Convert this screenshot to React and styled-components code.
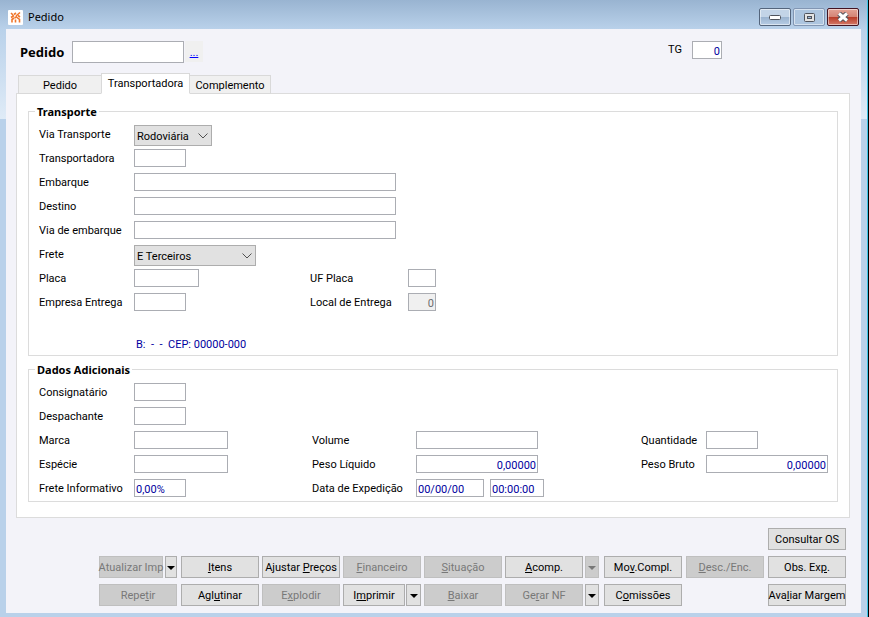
import React from 'react';
import styled, { createGlobalStyle, css } from 'styled-components';

const font = "Roboto, 'Liberation Sans', sans-serif";
const boldFont = "'Noto Sans', 'DejaVu Sans', sans-serif";

const GlobalStyle = createGlobalStyle`
  * {
    box-sizing: border-box;
  }

  body {
    margin: 0;
    font-family: ${font};
    font-size: 11px;
    line-height: 14px;
    color: #000;
  }

  button, input, select {
    font: inherit;
    margin: 0;
  }
`;

// Window frame
const Window = styled.div`
  display: flex;
  flex-direction: column;
  min-height: 100vh;
  padding: 0 7px 4px 6px;
  border-right: 1px solid #000;
  box-shadow: inset -1px 0 0 #3cc4e6;
  background:
    linear-gradient(#99b4d1, #b9d1ea) 0 0 / 100% 29px no-repeat,
    linear-gradient(#b9d1ea, #dfebf7) 0 29px / 100% 90px no-repeat,
    #b9d1ea;
`;

const TitleBar = styled.header`
  display: flex;
  align-items: center;
  height: 29px;
  padding: 5px 2px 0 2px;
  gap: 5px;
`;

const Title = styled.h1`
  flex: 1;
  margin: 0;
  font-family: 'Noto Sans', sans-serif;
  font-size: 11px;
  font-weight: 400;
`;

const WindowButtons = styled.div`
  display: flex;
  gap: 2px;
`;

const WindowButton = styled.button`
  display: flex;
  align-items: center;
  justify-content: center;
  width: 32px;
  height: 18px;
  padding: 0;
  border: 1px solid ${props => props.$border || '#54657c'};
  border-radius: 2px;
  box-shadow: inset 0 0 0 1px rgba(255, 255, 255, 0.5);
  background: ${props => props.$background || 'linear-gradient(#c3d4e7 50%, #9ab3cf 50%, #b7cde5)'};
`;

const Client = styled.main`
  flex: 1;
  padding: 12px 11px 7px 10px;
  background: #f3f3f9;
`;

// Inputs
const TextInput = styled.input`
  width: ${props => props.$width}px;
  height: ${props => props.$height || 18}px;
  padding: 2px 1px 0;
  border: 1px solid #abadb3;
  border-radius: 0;
  background: #fff;
  color: #0000a0;
  text-align: ${props => props.$align || 'left'};
  outline: none;

  &:disabled {
    background: #f0f0f0;
    color: #6d6d6d;
  }
`;

const SelectBox = styled.span`
  display: grid;
  align-items: center;
  align-self: end;
  width: ${props => props.$width}px;

  select {
    grid-area: 1 / 1;
    width: 100%;
    height: 21px;
    padding: 2px 18px 0 2px;
    border: 1px solid #adadad;
    border-radius: 0;
    background: #e1e1e1;
    color: #000;
    appearance: none;
  }

  svg {
    grid-area: 1 / 1;
    justify-self: end;
    margin-right: 4px;
    pointer-events: none;
  }
`;

// Order header
const OrderHeader = styled.div`
  display: flex;
  align-items: flex-start;
  height: 22px;
  margin-bottom: 10px;
  padding: 0 128px 0 4px;
`;

const OrderLabel = styled.label`
  width: 52px;
  font-family: ${boldFont};
  font-size: 13px;
  font-weight: 700;
  line-height: 22px;
`;

const LookupLink = styled.a`
  width: 18px;
  height: 21px;
  margin-left: 1px;
  background: #f0f0f0;
  color: #0000ff;
  line-height: 24px;
  text-align: center;
`;

const TypeLabel = styled.label`
  margin-left: auto;
  padding-right: 10px;
  line-height: 18px;
`;

// Tabs
const TabList = styled.div`
  display: flex;
  align-items: flex-end;
  height: 21px;
  padding-left: 2px;
`;

const Tab = styled.button`
  height: 19px;
  width: ${props => props.$width}px;
  margin-left: -1px;
  padding: 2px 0 0;
  border: 1px solid #d9d9d9;
  background: #f0f0f0;
  color: #000;
  text-align: center;

  &:first-child {
    margin-left: 0;
  }

  ${props => props.$active && css`
    position: relative;
    height: 21px;
    padding: 0;
    border-bottom-color: #fff;
    background: #fff;
  `}
`;

const TabPanel = styled.section`
  margin-top: -1px;
  padding: 10px 11px 15px;
  border: 1px solid #dcdcdc;
  background: #fff;
`;

const Group = styled.fieldset`
  min-width: 0;
  margin: 0 0 6px;
  padding: 3px 9px 1px 6px;
  border: 1px solid #dcdcdc;

  &:last-child {
    margin-bottom: 0;
  }
`;

const Legend = styled.legend`
  padding: 0 2px;
  font-family: ${boldFont};
  font-weight: 700;
  line-height: 15px;
`;

const Row = styled.div`
  display: grid;
  grid-template-columns: 95px 176px 98px 1fr;
  align-items: center;
  height: 24px;
  padding-left: 4px;

  label {
    padding-top: 2px;
  }
`;

const ExtraRow = styled(Row)`
  grid-template-columns: 95px 178px 104px 1fr 65px 122px;
`;

const Wide = styled.div`
  display: flex;
  grid-column: 2 / -1;
`;

const Pair = styled.div`
  display: flex;
  gap: 6px;
`;

const Address = styled.output`
  display: block;
  margin-top: 22px;
  padding-left: 101px;
  color: #0000a0;
  line-height: 18px;
  white-space: pre;
`;

// Footer buttons
const Actions = styled.footer`
  display: grid;
  grid-template-columns: 79px repeat(4, 78px) 96px 79px 79px 78px;
  grid-auto-rows: 22px;
  justify-content: end;
  gap: 6px 3px;
  margin-top: 10px;
  padding-right: 4px;
`;

const ActionCell = styled.div`
  display: flex;
  grid-column: ${props => props.$column};
  grid-row: ${props => props.$row};
  gap: ${props => props.$gap || 2}px;
`;

const ActionButton = styled.button`
  display: flex;
  align-items: center;
  justify-content: center;
  width: ${props => props.$width || 78}px;
  height: 22px;
  padding: 2px 0 0;
  border: 1px solid #adadad;
  background: #e1e1e1;
  color: #000;
  white-space: pre;

  &:disabled {
    border-color: #bfbfbf;
    background: #cccccc;
    color: #787878;
  }
`;

const Logo = () => (
  <svg width="15" height="15" viewBox="0 0 15 15" aria-hidden="true">
    <rect width="15" height="15" rx="1" fill="#fff" />
    <g fill="none" stroke="#f0762b" strokeWidth="1.6">
      <path d="M3 3 5 5M6 4.500 8 3M8 6 12 2.500M10 5.500 12 7M3 7.500 6 5.500M6.500 8 9 6.500M4 12.500V9.500L6 8M7.500 12.500V9.500M11.500 12.500V9.500L9 7.500" />
    </g>
  </svg>
);

const Chevron = () => (
  <svg width="10" height="6" viewBox="0 0 10 6" aria-hidden="true">
    <path d="M.5.5 5 5 9.500 .5" fill="none" stroke="#505050" />
  </svg>
);

const Arrow = () => (
  <svg width="8" height="4" viewBox="0 0 8 4" aria-hidden="true">
    <path d="M0 0h8L4 4z" fill="currentColor" />
  </svg>
);

const actions = [
  { label: 'Consultar OS', column: 9, row: 1 },
  { label: 'Atualizar Imp', column: 1, row: 2, width: 64, disabled: true, menu: { width: 12 } },
  { label: '_Itens', column: 2, row: 2 },
  { label: 'Ajustar _Preços', column: 3, row: 2 },
  { label: '_Financeiro', column: 4, row: 2, disabled: true },
  { label: '_Situação', column: 5, row: 2, disabled: true },
  { label: '_Acomp.', column: 6, row: 2, menu: { width: 14, disabled: true } },
  { label: 'Mo_v.Compl.', column: 7, row: 2 },
  { label: '_Desc./Enc.', column: 8, row: 2, disabled: true },
  { label: 'Obs. Ex_p.', column: 9, row: 2 },
  { label: 'Repe_tir', column: 1, row: 3, disabled: true },
  { label: 'Agl_utinar', column: 2, row: 3 },
  { label: 'E_xplodir', column: 3, row: 3, disabled: true },
  { label: 'I_mprimir', column: 4, row: 3, width: 62, gap: 1, menu: { width: 15 } },
  { label: '_Baixar', column: 5, row: 3, disabled: true },
  { label: 'Ge_rar NF', column: 6, row: 3, disabled: true, menu: { width: 14 } },
  { label: 'C_omissões', column: 7, row: 3 },
  { label: 'Ava_liar Margem', column: 9, row: 3 },
];

// The letter after "_" is the access key
const renderLabel = (label) => {
  const [before, after] = label.split('_');
  if (after === undefined) return label;
  return <span>{before}<u>{after[0]}</u>{after.slice(1)}</span>;
};

const Action = ({ label, column, row, width, gap, disabled, menu }) => (
  <ActionCell $column={column} $row={row} $gap={gap}>
    <ActionButton type="button" $width={width} disabled={disabled}>{renderLabel(label)}</ActionButton>
    {menu && (
      <ActionButton
        type="button"
        $width={menu.width}
        disabled={menu.disabled}
        aria-label={`${label.replace('_', '')} opções`}
      >
        <Arrow />
      </ActionButton>
    )}
  </ActionCell>
);

const Field = ({ id, label, value = '', width, align, disabled }) => (
  <>
    <label htmlFor={id}>{label}</label>
    <TextInput id={id} $width={width} $align={align} defaultValue={value} disabled={disabled} />
  </>
);

const WideField = ({ id, label }) => (
  <Row>
    <label htmlFor={id}>{label}</label>
    <Wide><TextInput id={id} $width={262} /></Wide>
  </Row>
);

const SelectField = ({ id, label, width, options }) => (
  <Row>
    <label htmlFor={id}>{label}</label>
    <SelectBox $width={width}>
      <select id={id}>
        {options.map(option => <option key={option}>{option}</option>)}
      </select>
      <Chevron />
    </SelectBox>
  </Row>
);

const App = () => (
  <>
    <GlobalStyle />
    <Window>
      <TitleBar>
        <Logo />
        <Title>Pedido</Title>
        <WindowButtons>
          <WindowButton type="button" aria-label="Minimizar">
            <svg width="12" height="6" viewBox="0 0 12 6">
              <rect x=".5" y="1.500" width="11" height="4" rx="1" fill="#fff" stroke="#4f535c" />
            </svg>
          </WindowButton>
          <WindowButton type="button" aria-label="Maximizar" $border="#8296b3" $background="#adc5df">
            <svg width="11" height="9" viewBox="0 0 11 9">
              <rect x=".5" y=".5" width="10" height="8" rx="1" fill="#e3e3e3" stroke="#4f535c" />
              <rect x="3.500" y="3.500" width="4" height="2" fill="#9db8d8" stroke="#4f535c" />
            </svg>
          </WindowButton>
          <WindowButton
            type="button"
            aria-label="Fechar"
            $border="#431422"
            $background="linear-gradient(#e3a396, #d48374 50%, #b83a26 50%, #d47a6a)"
          >
            <svg width="12" height="10" viewBox="0 0 12 10">
              <path d="M2 1.500 10 8.500M10 1.500 2 8.500" stroke="#4f535c" strokeWidth="5" />
              <path d="M2 1.500 10 8.500M10 1.500 2 8.500" stroke="#fff" strokeWidth="3" />
            </svg>
          </WindowButton>
        </WindowButtons>
      </TitleBar>

      <Client>
        <OrderHeader>
          <OrderLabel htmlFor="pedido">Pedido</OrderLabel>
          <TextInput id="pedido" $width={112} $height={22} />
          <LookupLink href="#pedido">...</LookupLink>
          <TypeLabel htmlFor="tg">TG</TypeLabel>
          <TextInput id="tg" $width={30} $align="right" defaultValue="0" />
        </OrderHeader>

        <TabList role="tablist">
          <Tab type="button" role="tab" $width={84}>Pedido</Tab>
          <Tab type="button" role="tab" $width={89} $active aria-selected="true">Transportadora</Tab>
          <Tab type="button" role="tab" $width={82}>Complemento</Tab>
        </TabList>

        <TabPanel role="tabpanel">
          <Group>
            <Legend>Transporte</Legend>
            <SelectField id="via" label="Via Transporte" width={78} options={['Rodoviária']} />
            <Row><Field id="transportadora" label="Transportadora" width={52} /></Row>
            <WideField id="embarque" label="Embarque" />
            <WideField id="destino" label="Destino" />
            <WideField id="viaEmbarque" label="Via de embarque" />
            <SelectField id="frete" label="Frete" width={122} options={['E Terceiros']} />
            <Row>
              <Field id="placa" label="Placa" width={65} />
              <Field id="ufPlaca" label="UF Placa" width={28} />
            </Row>
            <Row>
              <Field id="empresa" label="Empresa Entrega" width={52} />
              <Field id="local" label="Local de Entrega" width={28} align="right" value="0" disabled />
            </Row>
            <Address>{'B:  -  -  CEP: 00000-000'}</Address>
          </Group>

          <Group>
            <Legend>Dados Adicionais</Legend>
            <ExtraRow><Field id="consignatario" label="Consignatário" width={52} /></ExtraRow>
            <ExtraRow><Field id="despachante" label="Despachante" width={52} /></ExtraRow>
            <ExtraRow>
              <Field id="marca" label="Marca" width={94} />
              <Field id="volume" label="Volume" width={122} />
              <Field id="quantidade" label="Quantidade" width={52} />
            </ExtraRow>
            <ExtraRow>
              <Field id="especie" label="Espécie" width={94} />
              <Field id="pesoLiquido" label="Peso Líquido" width={122} align="right" value="0,00000" />
              <Field id="pesoBruto" label="Peso Bruto" width={122} align="right" value="0,00000" />
            </ExtraRow>
            <ExtraRow>
              <Field id="freteInformativo" label="Frete Informativo" width={52} value="0,00%" />
              <label htmlFor="dataExpedicao">Data de Expedição</label>
              <Pair>
                <TextInput id="dataExpedicao" $width={68} defaultValue="00/00/00" />
                <TextInput $width={54} defaultValue="00:00:00" aria-label="Hora de Expedição" />
              </Pair>
            </ExtraRow>
          </Group>
        </TabPanel>

        <Actions>
          {actions.map(action => <Action key={action.label} {...action} />)}
        </Actions>
      </Client>
    </Window>
  </>
);

export default App;
